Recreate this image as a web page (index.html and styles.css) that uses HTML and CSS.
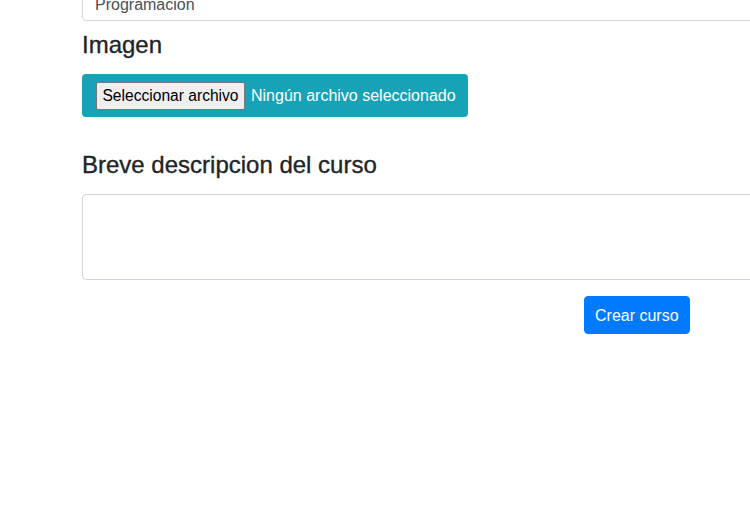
FILE: index.html
```html
<!DOCTYPE html>
<html lang="es">
<head>
<meta charset="utf-8">
<title>Crear curso</title>
<link rel="stylesheet" href="styles.css">
</head>
<body>
<form class="form">
  <div class="field field-first">
    <div class="control">Programacion</div>
  </div>
  <div class="field">
    <h4 class="label">Imagen</h4>
    <div class="file-box">
      <span class="file-btn">Seleccionar archivo</span>
      <span class="file-name">Ningún archivo seleccionado</span>
    </div>
  </div>
  <div class="field field-desc">
    <h4 class="label">Breve descripcion del curso</h4>
    <div class="control textarea"></div>
  </div>
  <div class="actions">
    <button type="button" class="btn-primary">Crear curso</button>
  </div>
</form>
</body>
</html>
```
FILE: styles.css
```css
html, body {
  margin: 0;
  padding: 0;
  overflow: hidden;
  background: #fff;
}
body {
  font-family: "Liberation Sans", Arial, sans-serif;
  color: #212529;
  font-size: 16px;
  width: 750px;
  height: 510px;
}
.form {
  margin-top: -17px;
  padding-left: 82px;
  width: 720px;
  display: flex;
  flex-direction: column;
}
.control {
  box-sizing: border-box;
  height: 38px;
  border: 1px solid #ced4da;
  border-radius: 4px;
  padding: 9px 12px 3px;
  color: #495057;
  line-height: 24px;
  font-size: 16px;
}
.label {
  margin: 0;
  font-size: 24px;
  font-weight: 500;
  line-height: 28.8px;
  -webkit-text-stroke: 0.35px #212529;
}
.field-first + .field .label {
  margin-top: 10px;
}
.file-box {
  margin-top: 14px;
  display: inline-flex;
  align-self: flex-start;
  align-items: center;
  gap: 6px;
  background: #17a2b8;
  border-radius: 4px;
  padding: 8px 12px 7px 14px;
  box-sizing: border-box;
  height: 43px;
}
.file-btn {
  box-sizing: border-box;
  width: 149px;
  height: 28px;
  padding: 0;
  text-align: center;
  background: #efefef;
  border: 1px solid #767676;
  border-radius: 2px;
  color: #000;
  line-height: 26px;
  font-size: 15.6px;
  white-space: nowrap;
}
.file-name {
  color: #fff;
  font-size: 16px;
}
.field-desc .label {
  margin-top: 34px;
}
.textarea {
  margin-top: 14px;
  height: 86px;
}
.actions {
  margin-top: 16px;
  padding-left: 502px;
}
.btn-primary {
  font-family: inherit;
  font-size: 16px;
  line-height: 24px;
  height: 38px;
  padding: 7px 10px 5px;
  background: #007bff;
  border: 1px solid #007bff;
  border-radius: 4px;
  color: #fff;
}
```
